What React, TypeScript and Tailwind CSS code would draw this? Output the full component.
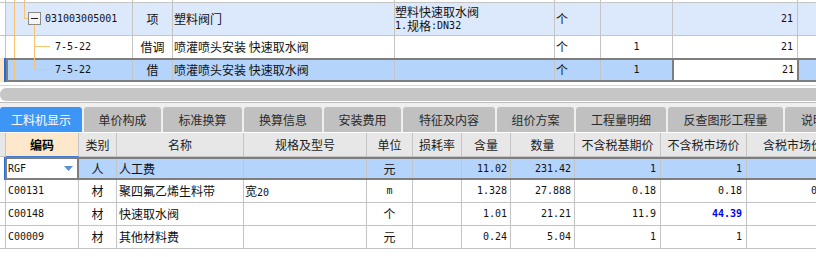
import React from 'react'

const CJK = "font-['Noto_Sans_CJK_SC','Noto_Sans_CJK_JP',sans-serif] text-[12px] leading-[14px]"
const MONO = "font-['DejaVu_Sans_Mono','Liberation_Mono',monospace] text-[10px] leading-[12px]"
const OR = '#f9c26f'

function C({ className = '', children }: { className?: string; children?: React.ReactNode }) {
  return (
    <div className={`flex h-full shrink-0 items-center overflow-hidden whitespace-nowrap border-r border-[#c4c4c4] ${className}`}>
      {children}
    </div>
  )
}

const N = ({ children, className = '' }: { children: React.ReactNode; className?: string }) => (
  <span className={`${MONO} ${className}`}>{children}</span>
)

// upper grid: 清单 + 定额 rows
function TopTable() {
  return (
    <div className={`${CJK} text-[#111]`}>
      {/* cut-off row above */}
      <div className="relative flex h-[3px] border-b border-[#c4c4c4]">
        <svg className="absolute left-0 top-0" width="40" height="2">
          <line x1="14.5" y1="0" x2="14.5" y2="2" stroke={OR} />
          <line x1="24.5" y1="0" x2="24.5" y2="2" stroke={OR} />
        </svg>
        <C className="w-[6px]" />
        <C className="w-[127px]" />
        <C className="w-[40px]" />
        <C className="w-[222px]" />
        <C className="w-[160px]" />
        <C className="w-[46px]" />
        <C className="w-[72px]" />
        <C className="w-[125px]" />
      </div>

      {/* 清单 row */}
      <div className="relative flex h-[33px] border-b border-[#c4c4c4] bg-[#dce8fc]">
        <C className="w-[6px] bg-white" />
        <C className="w-[127px] pl-[39px]">
          <N>031003005001</N>
        </C>
        <C className="w-[40px] justify-center">项</C>
        <C className="w-[222px] pl-[1px]">塑料阀门</C>
        <div className="flex h-full w-[160px] shrink-0 flex-col justify-center overflow-hidden whitespace-nowrap border-r border-[#c4c4c4]">
          <div className="h-[14px] leading-[14px]">塑料快速取水阀</div>
          <div className="flex h-[14px] items-center leading-[14px]">
            <N>1.</N>规格<N>:DN32</N>
          </div>
        </div>
        <C className="w-[46px] pl-[1px]">个</C>
        <C className="w-[72px]" />
        <C className="w-[125px] justify-end pr-[4px]">
          <N>21</N>
        </C>
        <svg className="absolute left-0 top-0" width="60" height="32">
          <line x1="14.5" y1="0" x2="14.5" y2="32" stroke={OR} />
          <line x1="24.5" y1="0" x2="24.5" y2="15.5" stroke={OR} />
          <line x1="24" y1="15.5" x2="28" y2="15.5" stroke={OR} />
          <line x1="34.5" y1="22" x2="34.5" y2="32" stroke={OR} />
          <rect x="28.5" y="9.5" width="12" height="12" fill="#f4f4f4" stroke="#8a8a8a" />
          <line x1="31" y1="15.5" x2="38" y2="15.5" stroke="#222" />
        </svg>
      </div>

      {/* 借调 row */}
      <div className="relative flex h-[22px] bg-white">
        <C className="w-[6px]" />
        <C className="w-[127px] pl-[49px]">
          <N>7-5-22</N>
        </C>
        <C className="w-[40px] justify-center">借调</C>
        <C className="w-[222px] pl-[1px]">喷灌喷头安装 快速取水阀</C>
        <C className="w-[160px]" />
        <C className="w-[46px] pl-[1px]">个</C>
        <C className="w-[72px] justify-center">
          <N>1</N>
        </C>
        <C className="w-[125px] justify-end pr-[4px]">
          <N>21</N>
        </C>
        <svg className="absolute left-0 top-0" width="60" height="22">
          <line x1="14.5" y1="0" x2="14.5" y2="22" stroke={OR} />
          <line x1="34.5" y1="0" x2="34.5" y2="22" stroke={OR} />
          <line x1="34" y1="10.5" x2="50" y2="10.5" stroke={OR} />
        </svg>
      </div>

      {/* selected 借 row */}
      <div className="relative flex h-[24px]">
        <div className="flex h-full w-[6px] shrink-0">
          <div className="w-[4px] bg-[#fde7c8]" />
          <div className="w-[2px] bg-[#1f6fe0]" />
        </div>
        <div className="flex h-full flex-1 border-y-2 border-l-2 border-[#7e7e7e] bg-[#b4d4fc]">
          <C className="w-[125px] pl-[47px]">
            <N>7-5-22</N>
          </C>
          <C className="w-[40px] justify-center">借</C>
          <C className="w-[222px] pl-[1px]">喷灌喷头安装 快速取水阀</C>
          <C className="w-[160px]" />
          <C className="w-[46px] pl-[1px]">个</C>
          <C className="w-[71px] justify-center border-r-0">
            <N>1</N>
          </C>
          <div className="flex h-full w-[127px] shrink-0 items-center justify-end border-x-2 border-[#7e7e7e] bg-white pr-[3px]">
            <N>21</N>
          </div>
        </div>
        <svg className="absolute left-0 top-0" width="60" height="24">
          <line x1="14.5" y1="2" x2="14.5" y2="22" stroke={OR} />
          <line x1="34.5" y1="0" x2="34.5" y2="11.5" stroke={OR} />
          <line x1="34" y1="11.5" x2="50" y2="11.5" stroke={OR} />
        </svg>
      </div>
    </div>
  )
}

const tabs = [
  { t: '工料机显示', w: 'w-[82px]', on: true },
  { t: '单价构成', w: 'w-[77px]' },
  { t: '标准换算', w: 'w-[79px]' },
  { t: '换算信息', w: 'w-[78px]' },
  { t: '安装费用', w: 'w-[77px]' },
  { t: '特征及内容', w: 'w-[92px]' },
  { t: '组价方案', w: 'w-[77px]' },
  { t: '工程量明细', w: 'w-[90px]' },
  { t: '反查图形工程量', w: 'w-[115px]' },
  { t: '说明信息', w: 'w-[80px]' },
]

function Tabs() {
  return (
    <div className="bg-[#efefef]">
      <div className="h-px bg-white" />
      <div className="h-px bg-[#bdbdbd]" />
      <div className="h-[4px]" />
      <div className={`${CJK} flex h-[25px] gap-[2px] overflow-hidden`}>
        {tabs.map((x) => (
          <div
            key={x.t}
            className={`flex h-full shrink-0 items-center justify-center whitespace-nowrap rounded-t-[3px] ${x.w} ${
              x.on ? 'bg-[#3d96f6] text-white' : 'bg-[#c0c0c0] text-[#2a2a2a]'
            }`}
          >
            {x.t}
          </div>
        ))}
      </div>
      <div className="h-px bg-white" />
    </div>
  )
}

type Row = {
  code: string
  kind: string
  name: string
  spec?: string
  unit: React.ReactNode
  qty: string
  amt: string
  base: string
  market: string
  tax: string
  blue?: boolean
}

const rows: Row[] = [
  { code: 'C00131', kind: '材', name: '聚四氟乙烯生料带', spec: '宽20', unit: <N>m</N>, qty: '1.328', amt: '27.888', base: '0.18', market: '0.18', tax: '0.18' },
  { code: 'C00148', kind: '材', name: '快速取水阀', unit: '个', qty: '1.01', amt: '21.21', base: '11.9', market: '44.39', tax: '', blue: true },
  { code: 'C00009', kind: '材', name: '其他材料费', unit: '元', qty: '0.24', amt: '5.04', base: '1', market: '1', tax: '' },
]

function BottomTable() {
  const hd = 'justify-center border-b bg-[#e7e7e7] text-[#222]'
  return (
    <div className={`${CJK} text-[#111]`}>
      <div className="flex h-[24px]">
        <C className={`w-[6px] ${hd}`} />
        <C className="w-[73px] justify-center border-b border-b-[#3d7fd6] bg-[#fde8cb] font-bold text-black">编码</C>
        <C className={`w-[38px] ${hd}`}>类别</C>
        <C className={`w-[127px] ${hd}`}>名称</C>
        <C className={`w-[123px] ${hd}`}>规格及型号</C>
        <C className={`w-[46px] ${hd}`}>单位</C>
        <C className={`w-[49px] ${hd}`}>损耗率</C>
        <C className={`w-[49px] ${hd}`}>含量</C>
        <C className={`w-[64px] ${hd}`}>数量</C>
        <C className={`w-[86px] ${hd}`}>不含税基期价</C>
        <C className={`w-[86px] ${hd}`}>不含税市场价</C>
        <C className={`w-[93px] ${hd}`}>含税市场价</C>
      </div>

      {/* selected 人工费 row */}
      <div className="flex h-[23px]">
        <div className="flex h-full w-[5px] shrink-0">
          <div className="w-[4px] bg-white" />
          <div className="w-[1px] bg-[#1f6fe0]" />
        </div>
        <div className="flex h-full flex-1 border-y-2 border-[#7e7e7e] bg-[#b4d4fc]">
          <div className="relative flex h-full w-[74px] shrink-0 items-center border-x-2 border-[#7e7e7e] bg-white pl-[1px]">
            <N>RGF</N>
            <svg className="absolute left-[57px] top-[7px]" width="9" height="5">
              <path d="M0 0 L9 0 L4.5 5 Z" fill="#5b8fd8" />
            </svg>
          </div>
          <C className="w-[38px] justify-center">人</C>
          <C className="w-[127px] pl-[2px]">人工费</C>
          <C className="w-[123px]" />
          <C className="w-[46px] justify-center">元</C>
          <C className="w-[49px]" />
          <C className="w-[49px] justify-end pr-[3px]"><N>11.02</N></C>
          <C className="w-[64px] justify-end pr-[3px]"><N>231.42</N></C>
          <C className="w-[86px] justify-end pr-[4px]"><N>1</N></C>
          <C className="w-[86px] justify-end pr-[4px]"><N>1</N></C>
          <C className="w-[93px] justify-end pr-[4px]" />
        </div>
      </div>

      {rows.map((r) => (
        <div key={r.code} className="flex h-[23px] border-b border-[#c4c4c4]">
          <C className="w-[6px]" />
          <C className="w-[73px] pl-[2px]"><N>{r.code}</N></C>
          <C className="w-[38px] justify-center">{r.kind}</C>
          <C className="w-[127px] pl-[2px]">{r.name}</C>
          <C className="w-[123px] pl-[1px]">
            {r.spec && (
              <span>
                宽<N>20</N>
              </span>
            )}
          </C>
          <C className="w-[46px] justify-center">{r.unit}</C>
          <C className="w-[49px]" />
          <C className="w-[49px] justify-end pr-[3px]"><N>{r.qty}</N></C>
          <C className="w-[64px] justify-end pr-[3px]"><N>{r.amt}</N></C>
          <C className="w-[86px] justify-end pr-[4px]"><N>{r.base}</N></C>
          <C className="w-[86px] justify-end pr-[4px]">
            <N className={r.blue ? 'font-bold text-[#0000ff]' : ''}>{r.market}</N>
          </C>
          <C className="w-[93px] justify-end pr-[4px]"><N>{r.tax}</N></C>
        </div>
      ))}
    </div>
  )
}

export default function App() {
  return (
    <div className="h-[257px] w-[816px] overflow-hidden bg-white">
      <TopTable />
      <div className="h-[3px] bg-white" />
      <div className="h-px bg-[#d6d6d6]" />
      <div className="h-[2px] bg-white" />
      <div className="h-[13px] rounded-l-[6px] bg-[#c6c6c6]" />
      <Tabs />
      <BottomTable />
    </div>
  )
}
